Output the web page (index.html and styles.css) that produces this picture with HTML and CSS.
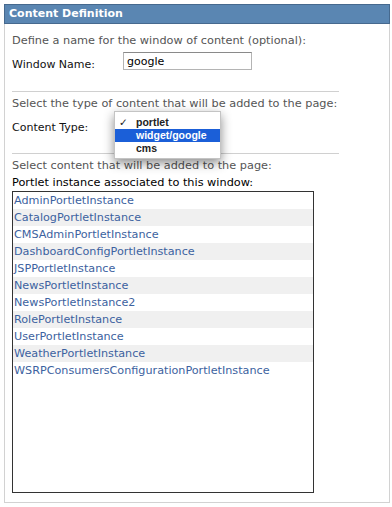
FILE: index.html
```html
<!DOCTYPE html>
<html lang="en">
<head>
    <meta charset="UTF-8">
    <title>Content Definition</title>
    <link rel="stylesheet" href="styles.css">
</head>
<body>
    <div class="panel">
        <div class="panel-title">Content Definition</div>
        <div class="panel-body">
            <p class="hint">Define a name for the window of content (optional):</p>
            <div class="field">
                <label>Window Name:</label>
                <input type="text" class="name-input" value="google">
            </div>
            <hr>
            <p class="hint">Select the type of content that will be added to the page:</p>
            <div class="field">
                <label>Content Type:</label>
                <div class="select-wrap">
                    <ul class="popup">
                        <li><span class="check">&#10003;</span>portlet</li>
                        <li class="selected">widget/google</li>
                        <li>cms</li>
                    </ul>
                </div>
            </div>
            <hr class="second">
            <p class="hint">Select content that will be added to the page:</p>
            <p class="list-label">Portlet instance associated to this window:</p>
            <div class="listbox">
                <a>AdminPortletInstance</a>
                <a>CatalogPortletInstance</a>
                <a>CMSAdminPortletInstance</a>
                <a>DashboardConfigPortletInstance</a>
                <a>JSPPortletInstance</a>
                <a>NewsPortletInstance</a>
                <a>NewsPortletInstance2</a>
                <a>RolePortletInstance</a>
                <a>UserPortletInstance</a>
                <a>WeatherPortletInstance</a>
                <a>WSRPConsumersConfigurationPortletInstance</a>
            </div>
        </div>
    </div>
</body>
</html>
```

FILE: styles.css
```css
body {
    margin: 0;
    padding: 4px;
    font-family: "DejaVu Sans", Verdana, sans-serif;
    font-size: 11px;
    background: white;
}
.panel {
    width: 386px;
    height: 499px;
    border: 1px solid #d2d2d2;
    border-top: none;
    box-sizing: border-box;
}
.panel-title {
    background: #5a86b2;
    border: 1px solid #46698e;
    margin: 0 -1px;
    height: 20px;
    box-sizing: border-box;
    color: white;
    font-weight: bold;
    font-size: 11px;
    line-height: 18px;
    padding-left: 4px;
}
.panel-body {
    padding: 8px 50px 0 7px;
}
.hint {
    margin: 0;
    color: #555;
    font-size: 11.3px;
    line-height: 18px;
    white-space: nowrap;
}
.field {
    display: flex;
    align-items: flex-start;
    height: 26px;
    margin-top: 2px;
}
.field label {
    width: 111px;
    line-height: 26px;
    color: #111;
}
.name-input {
    width: 129px;
    height: 18px;
    box-sizing: border-box;
    border: 1px solid #b4b4b4;
    border-top-color: #8a8a8a;
    font-family: "DejaVu Sans", Verdana, sans-serif;
    font-size: 11px;
    padding: 0 3px;
    margin: 0;
}
hr {
    border: none;
    border-top: 1px solid #d0d0d0;
    margin: 13px 0 3px;
}
hr.second {
    margin-top: 12px;
}
.select-wrap {
    position: relative;
    width: 100px;
    height: 18px;
}
.popup {
    position: absolute;
    left: -9px;
    top: -4px;
    width: 105px;
    margin: 0;
    padding: 4px 0 3px;
    list-style: none;
    background: rgba(255, 255, 255, 0.97);
    border: 1px solid #c4c4c4;
    box-shadow: 0 4px 10px rgba(0, 0, 0, 0.45);
    font-family: "Liberation Sans", Arial, sans-serif;
    font-size: 10.5px;
    font-weight: bold;
    color: #222;
}
.popup li {
    height: 13px;
    line-height: 13px;
    padding-left: 21px;
    position: relative;
}
.popup .check {
    position: absolute;
    left: 4px;
    font-family: "DejaVu Sans", sans-serif;
    font-weight: normal;
}
.popup .selected {
    background: #1b5fd8;
    color: white;
}
.list-label {
    margin: 0;
    color: #000;
    font-size: 11.3px;
    line-height: 16px;
}
.listbox {
    width: 302px;
    height: 302px;
    border: 1px solid #333;
    box-sizing: border-box;
}
.listbox a {
    display: block;
    height: 17px;
    line-height: 17px;
    color: #3c62a0;
    font-size: 11.2px;
    padding-left: 1px;
}
.listbox a:nth-child(even) {
    background: #f0f0f0;
}
```
